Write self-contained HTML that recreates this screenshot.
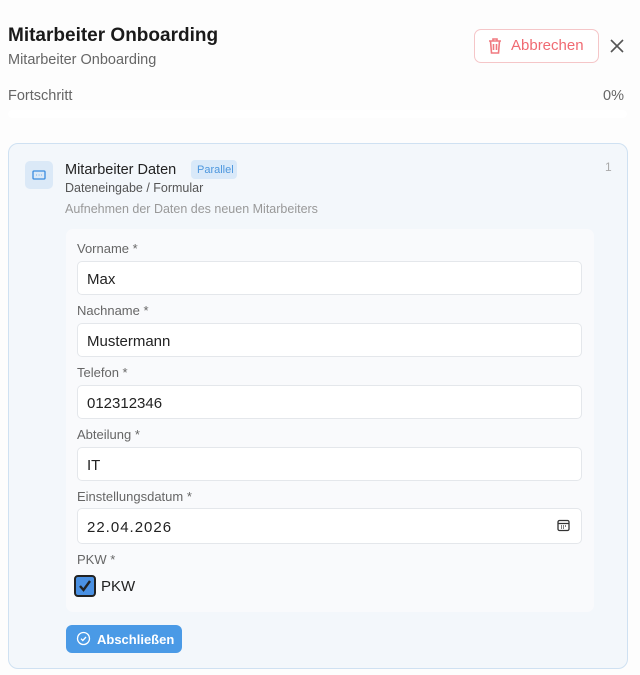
<!DOCTYPE html>
<html><head><style>
*{box-sizing:border-box;margin:0;padding:0}
body{width:640px;height:675px;background:#fdfdfd;font-family:"Liberation Sans",sans-serif;position:relative;overflow:hidden;color:#222}
.a{position:absolute}
.lbl{position:absolute;left:77px;font-size:13px;color:#666}
.inp{position:absolute;left:77px;width:505px;height:34px;background:#fff;border:1px solid #e4e7eb;border-radius:5px;font-size:15px;color:#222;padding:9px 0 0 9px}
</style></head><body>
<div class="a" style="left:8px;top:25px;font-size:19px;font-weight:bold;color:#1a1a1a">Mitarbeiter Onboarding</div>
<div class="a" style="left:8px;top:52px;font-size:14.5px;color:#666">Mitarbeiter Onboarding</div>
<div class="a" style="left:474px;top:29px;width:125px;height:34px;border:1px solid #f5c6c8;border-radius:7px;background:#fff"></div>
<svg class="a" style="left:487px;top:37px" width="16" height="18" viewBox="0 0 16 18" fill="none" stroke="#f07a80" stroke-width="1.6"><path d="M2 4h12M6 4V2h4v2M3.5 4l1 12h7l1-12M6.5 7v6M9.5 7v6"/></svg>
<div class="a" style="left:511px;top:37px;font-size:15px;color:#f06a72">Abbrechen</div>
<svg class="a" style="left:610px;top:39px" width="14" height="14" viewBox="0 0 14 14" stroke="#555" stroke-width="1.6"><path d="M1 1l12 12M13 1L1 13"/></svg>
<div class="a" style="left:8px;top:88px;font-size:14.5px;color:#666">Fortschritt</div>
<div class="a" style="left:603px;top:88px;font-size:14.5px;color:#666">0%</div>
<div class="a" style="left:8px;top:110px;width:619px;height:8px;background:#fff;border-radius:4px"></div>
<div class="a" style="left:8px;top:143px;width:620px;height:526px;background:#f3f7fb;border:1px solid #cfe1f2;border-radius:10px"></div>
<div class="a" style="left:25px;top:161px;width:28px;height:28px;background:#dbe9f7;border-radius:5px"></div>
<svg class="a" style="left:32px;top:169px" width="14" height="12" viewBox="0 0 14 12" fill="none" stroke="#3b8de0" stroke-width="1.3"><rect x="1" y="2" width="12" height="8" rx="1"/><path d="M4.5 6h.5M6.8 6h.5M9 6h.5"/></svg>
<div class="a" style="left:65px;top:162px;font-size:14.5px;color:#222">Mitarbeiter Daten</div>
<div class="a" style="left:191px;top:160px;width:46px;height:19px;background:#d9e9f9;border-radius:4px;font-size:11px;color:#4d97de;padding:4px 0 0 6px">Parallel</div>
<div class="a" style="left:65px;top:181px;font-size:12.5px;color:#555">Dateneingabe / Formular</div>
<div class="a" style="left:65px;top:202px;font-size:12.5px;color:#999">Aufnehmen der Daten des neuen Mitarbeiters</div>
<div class="a" style="left:605px;top:160px;font-size:12px;color:#aaa">1</div>
<div class="a" style="left:66px;top:229px;width:528px;height:383px;background:#f9fafc;border-radius:7px"></div>
<div class="lbl" style="top:241px">Vorname *</div><div class="inp" style="top:261px">Max</div>
<div class="lbl" style="top:303px">Nachname *</div><div class="inp" style="top:323px">Mustermann</div>
<div class="lbl" style="top:365px">Telefon *</div><div class="inp" style="top:385px">012312346</div>
<div class="lbl" style="top:427px">Abteilung *</div><div class="inp" style="top:447px">IT</div>
<div class="lbl" style="top:489px">Einstellungsdatum *</div><div class="inp" style="top:508px;height:36px;padding-top:10px;letter-spacing:1px">22.04.2026</div>
<svg class="a" style="left:557px;top:519px" width="13" height="13" viewBox="0 0 13 13" fill="none" stroke="#333" stroke-width="1.3"><rect x="1" y="1.5" width="11" height="10" rx="1.5"/><path d="M1 4.5h11M4 7h1M6 7h1M8 7h1M4 9h1M6 9h1"/></svg>
<div class="lbl" style="top:552px">PKW *</div>
<div class="a" style="left:74px;top:575px;width:22px;height:22px;border:2px solid #222;border-radius:4px;background:#4a90e2"></div>
<svg class="a" style="left:78px;top:579px" width="14" height="14" viewBox="0 0 14 14" fill="none" stroke="#222" stroke-width="2.4"><path d="M2 7l3.5 4L12 2"/></svg>
<div class="a" style="left:101px;top:578px;font-size:15px;color:#222">PKW</div>
<div class="a" style="left:66px;top:625px;width:116px;height:28px;background:#4a9ae6;border-radius:6px;color:#fff;font-size:13px;font-weight:bold;padding:7px 0 0 31px">Abschließen</div>
<svg class="a" style="left:76px;top:631px" width="15" height="15" viewBox="0 0 15 15" fill="none" stroke="#fff" stroke-width="1.3"><circle cx="7.5" cy="7.5" r="6"/><path d="M5 7.7l1.8 1.8L10 6"/></svg>
</body></html>
